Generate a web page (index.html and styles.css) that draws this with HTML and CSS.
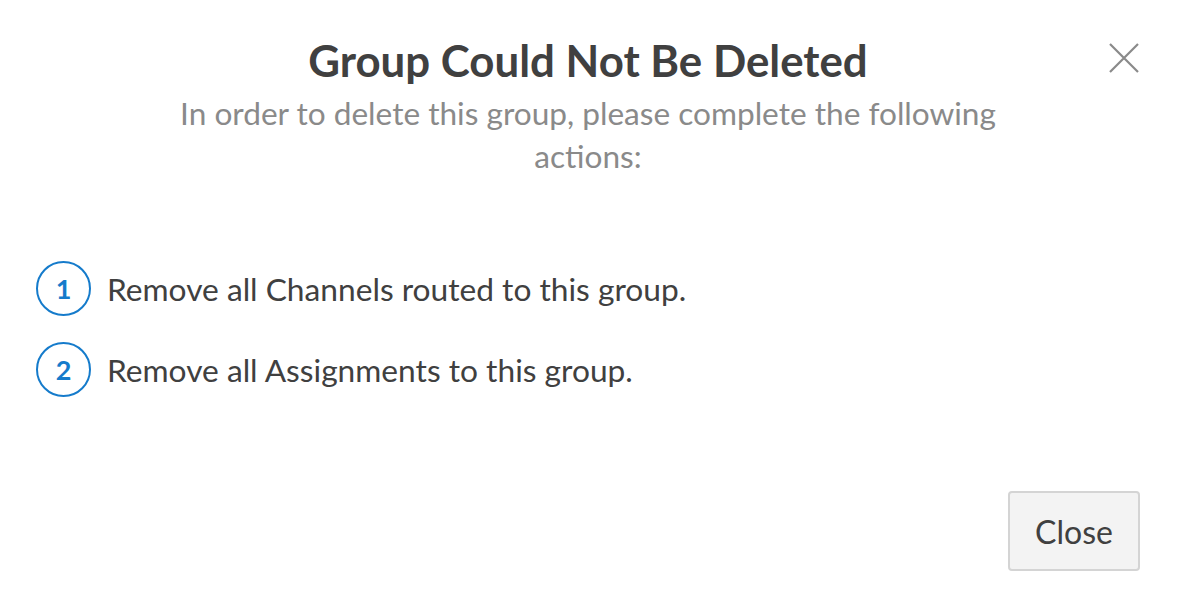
FILE: index.html
```html
<!DOCTYPE html>
<html lang="en">
<head>
  <meta charset="UTF-8" />
  <title>Group Could Not Be Deleted</title>
  <link rel="stylesheet" href="styles.css">
</head>
<body>
  <div class="modal">
    <div class="modal-header">
      <h2>Group Could Not Be Deleted</h2>
      <p class="subtitle">In order to delete this group, please complete the following actions:</p>
      <button class="close-x" aria-label="Close">
        <svg width="32" height="32" viewBox="0 0 32 32">
          <path d="M2 2 L30 30 M30 2 L2 30" stroke="#8a8a8a" stroke-width="2.2" fill="none" />
        </svg>
      </button>
    </div>

    <ol class="steps">
      <li><span class="step-num">1</span>Remove all Channels routed to this group.</li>
      <li><span class="step-num">2</span>Remove all Assignments to this group.</li>
    </ol>

    <div class="modal-footer">
      <button class="btn-close">Close</button>
    </div>
  </div>
</body>
</html>
```

FILE: styles.css
```css
body {
  margin: 0;
  font-family: Lato, 'Open Sans', sans-serif;
  background: #ffffff;
  color: #404040;
}

.modal {
  width: 1178px;
  height: 606px;
  box-sizing: border-box;
  padding: 34px 38px 0 36px;
  display: flex;
  flex-direction: column;
}

.modal-header {
  position: relative;
  text-align: center;
}

.modal-header h2 {
  margin: 0;
  font-size: 43.8px;
  font-weight: 700;
  color: #404040;
  line-height: 52px;
}

.subtitle {
  margin: 6px auto 0;
  max-width: 880px;
  font-size: 31.6px;
  line-height: 43px;
  color: #8a8a8a;
}

.close-x {
  position: absolute;
  top: 8px;
  right: 0;
  border: none;
  background: none;
  padding: 0;
  cursor: pointer;
}

.steps {
  list-style: none;
  margin: 83px 0 0;
  padding: 0;
  display: flex;
  flex-direction: column;
  gap: 26px;
}

.steps li {
  display: flex;
  align-items: center;
  gap: 16px;
  font-size: 31.7px;
  color: #404040;
}

.step-num {
  width: 55px;
  height: 55px;
  box-sizing: border-box;
  border: 2px solid #157bcb;
  border-radius: 50%;
  display: flex;
  align-items: center;
  justify-content: center;
  color: #157bcb;
  font-weight: 700;
  font-size: 27px;
}

.modal-footer {
  margin-top: auto;
  padding-bottom: 35px;
  display: flex;
  justify-content: flex-end;
}

.btn-close {
  width: 132px;
  height: 80px;
  background: #f3f3f3;
  border: 2px solid #d4d4d4;
  border-radius: 4px;
  font-family: inherit;
  font-size: 32px;
  color: #404040;
  cursor: pointer;
}
```
